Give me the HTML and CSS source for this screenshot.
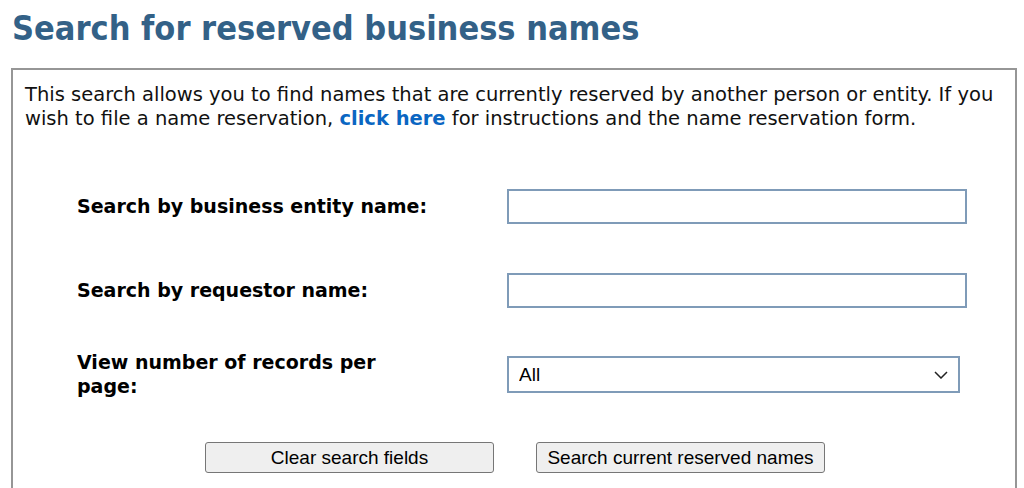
FILE: index.html
```
<!DOCTYPE html>
<html>
<head>
<meta charset="UTF-8">
<title>Search for reserved business names</title>
<link rel="stylesheet" href="styles.css">
</head>
<body>
<h1 class="title">Search for reserved business names</h1>
<div class="panel">
  <p class="intro">This search allows you to find names that are currently reserved by another person or entity. If you wish to file a name reservation, <a href="#">click here</a> for instructions and the name reservation form.</p>
  <form class="search">
    <div class="row">
      <label class="lbl" for="entity">Search by business entity name:</label>
      <input class="field" type="text" id="entity">
    </div>
    <div class="row">
      <label class="lbl" for="requestor">Search by requestor name:</label>
      <input class="field" type="text" id="requestor">
    </div>
    <div class="row">
      <label class="lbl" for="perpage">View number of records per page:</label>
      <div class="selectwrap">
        <select class="pick" id="perpage">
          <option>All</option>
          <option>10</option>
          <option>25</option>
          <option>50</option>
        </select>
        <svg class="caret" width="14" height="8" viewBox="0 0 14 8"><path d="M1 1 L7 7 L13 1" fill="none" stroke="#222" stroke-width="1.5"/></svg>
      </div>
    </div>
    <div class="buttons">
      <input class="btn" type="reset" value="Clear search fields">
      <input class="btn" type="button" value="Search current reserved names">
    </div>
  </form>
</div>
</body>
</html>
```
FILE: styles.css
```
body {
	margin:0;
	background-color:#fff;
	color:#000;
	font-family:"DejaVu Sans", sans-serif;
}

.title
{
	margin:0;
	padding:8px 0 0 12px;
	height:68px;
	box-sizing:border-box;
	font-family:"DejaVu Sans Condensed", "DejaVu Sans", sans-serif;
	font-size:34px;
	font-weight:bold;
	color:#336187;
}

.panel
{
	margin:0 7px 0 11px;
	border:2px solid #969696;
	border-bottom:none;
	padding:13px 12px 20px 12px;
	height:420px;
	box-sizing:border-box;
}

.intro
{
	margin:0;
	font-size:19.5px;
	line-height:24px;
	color:#111;
}

.intro a
{
	color:#0a66c2;
	font-weight:bold;
	text-decoration:none;
}

.search
{
	padding-top:33px;
}

.row
{
	display:flex;
	align-items:center;
	height:84px;
	margin-left:52px;
}

.lbl
{
	width:430px;
	font-size:19px;
	font-weight:bold;
	line-height:24px;
}

.row:nth-child(3) .lbl
{
	width:330px;
	margin-right:100px;
}

.field
{
	width:460px;
	height:35px;
	box-sizing:border-box;
	border:2px solid #7f9bb8;
	border-radius:0;
	font-size:18px;
	font-family:"Liberation Sans", Arial, sans-serif;
	padding:0 10px;
}

.selectwrap
{
	position:relative;
	width:453px;
	height:37px;
}

.pick
{
	width:100%;
	height:100%;
	box-sizing:border-box;
	border:2px solid #7f9bb8;
	border-radius:0;
	background:#fff;
	appearance:none;
	-webkit-appearance:none;
	font-family:"Liberation Sans", Arial, sans-serif;
	font-size:19px;
	padding:0 10px;
	color:#000;
}

.caret
{
	position:absolute;
	right:12px;
	top:15px;
	pointer-events:none;
}

.buttons
{
	display:flex;
	gap:42px;
	margin-left:180px;
	padding-top:26px;
}

.btn
{
	width:289px;
	height:31px;
	box-sizing:border-box;
	border:1px solid #767676;
	border-radius:3px;
	background:#efefef;
	font-family:"Liberation Sans", Arial, sans-serif;
	font-size:19px;
	color:#000;
}
```
